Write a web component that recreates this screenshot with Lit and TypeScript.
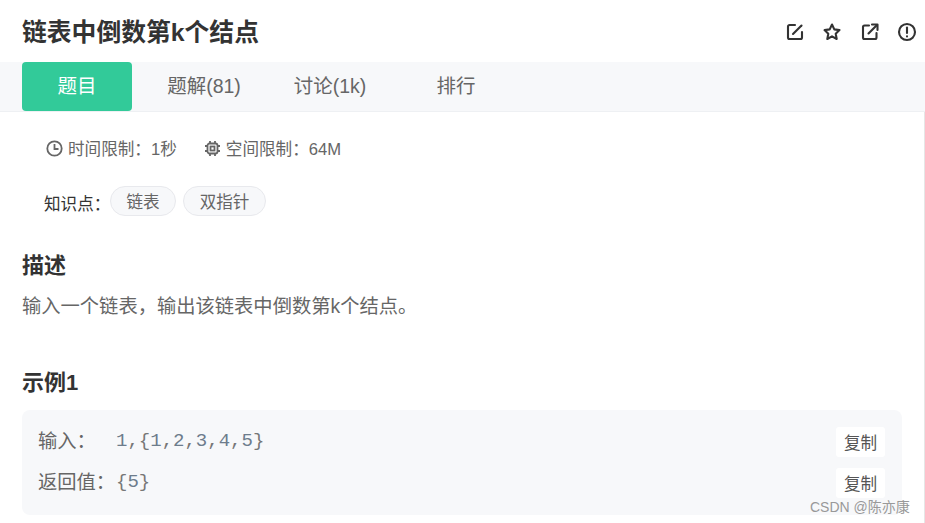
import { LitElement, html, css } from "lit";
import { customElement } from "lit/decorators.js";

@customElement("app-root")
export class AppRoot extends LitElement {
  static styles = css`
    :host {
      display: block;
      width: 925px;
      height: 523px;
      overflow: hidden;
      background: #fff;
      position: relative;
      font-family: "Liberation Sans", "Noto Sans CJK SC", sans-serif;
      color: #666;
    }
    .head {
      height: 62px;
      display: flex;
      align-items: center;
      justify-content: space-between;
      padding: 2px 7px 0 22px;
      box-sizing: border-box;
    }
    h1 {
      margin: 0;
      font-size: 24.8px;
      line-height: 30px;
      font-weight: 700;
      color: #333;
      padding-top: 2px;
    }
    .tools { display: flex; gap: 15.3px; }
    .tools svg { width: 22px; height: 22px; display: block; fill: none; stroke: #333; stroke-width: 2.1; stroke-linecap: round; stroke-linejoin: round; }
    .tabs {
      height: 50px;
      background: #f7f8fa;
      border-bottom: 1px solid #eef0f3;
      box-sizing: border-box;
      display: flex;
      padding-left: 22px;
      font-size: 19.5px;
    }
    .tab {
      width: 110px;
      height: 45px;
      padding-bottom: 4px;
      display: flex;
      align-items: center;
      justify-content: center;
      color: #666;
      margin-right: 16px;
    }
    .tab.active {
      background: #32ca99;
      color: #fff;
      border-radius: 4px;
      margin-right: 17px;
    }
    .limits {
      display: flex;
      padding: 26px 0 0 45px;
      font-size: 16.6px;
      line-height: 24px;
      gap: 26px;
      height: 24px;
    }
    .limit { display: flex; align-items: center; gap: 4px; }
    .limit svg { width: 19px; height: 19px; fill: none; stroke: #666; stroke-width: 1.8; margin-top: -4px; }
    .know {
      display: flex;
      align-items: center;
      padding: 24px 0 0 44px;
      font-size: 16.6px;
      color: #333;
      height: 30px;
    }
    .know .lbl { width: 66px; padding-top: 4px; white-space: nowrap; }
    .pill {
      height: 30px;
      box-sizing: border-box;
      border: 1px solid #e8e9ed;
      border-radius: 15px;
      background: #f7f8fa;
      color: #666;
      padding: 0 15.5px;
      margin-right: 7px;
      display: flex;
      align-items: center;
    }
    h2 {
      margin: 0;
      font-size: 22px;
      line-height: 28px;
      font-weight: 700;
      color: #333;
      padding-left: 22px;
    }
    h2.d { margin-top: 36px; }
    h2.e { margin-top: 50px; }
    .desc {
      padding: 15px 0 0 22px;
      margin: 0;
      font-size: 19.3px;
      line-height: 24px;
      color: #666;
    }
    .example {
      margin: 13px 23px 0 22px;
      background: #f7f8fa;
      border-radius: 8px;
      height: 105px;
      box-sizing: border-box;
      padding: 17px 17px 0 16px;
      display: flex;
      flex-direction: column;
      gap: 11px;
    }
    .row {
      display: flex;
      align-items: center;
      height: 30px;
      font-size: 19.3px;
    }
    .row .k { white-space: nowrap; width: 78px; margin-top: -4px; }
    .code {
      font-family: "Liberation Mono", monospace;
      font-size: 19px;
      color: #777;
      flex: 1;
      margin-top: -2px;
    }
    .n { color: #6d7c8c; }
    .copy {
      width: 49px;
      height: 30px;
      background: #fff;
      border-radius: 3px;
      font-size: 16.6px;
      display: flex;
      align-items: center;
      justify-content: center;
      color: #555;
    }
    .wm {
      position: absolute;
      left: 810px;
      top: 497px;
      font-size: 14px;
      line-height: 20px;
      color: #999;
    }
    .rule {
      position: absolute;
      left: 924px;
      top: 112px;
      bottom: 0;
      width: 1px;
      background: #e6e6e6;
    }
  `;

  render() {
    return html`
      <div class="head">
        <h1>链表中倒数第k个结点</h1>
        <div class="tools">
          <svg viewBox="0 0 22 22"><path d="M11 4H5.5A1.5 1.5 0 0 0 4 5.5v11A1.5 1.5 0 0 0 5.5 18h11a1.5 1.5 0 0 0 1.5-1.5V11"/><path d="M9 13l8.5-8.5"/></svg>
          <svg viewBox="0 0 22 22"><path d="M11 3.5l2.3 4.9 5.2.7-3.8 3.6 1 5.3-4.7-2.6-4.7 2.6 1-5.3-3.8-3.6 5.2-.7z"/></svg>
          <svg viewBox="0 0 22 22"><path d="M10 4.5H5.5A1.5 1.5 0 0 0 4 6v10.5A1.5 1.5 0 0 0 5.5 18H16a1.5 1.5 0 0 0 1.5-1.5V12"/><path d="M9.5 12.5L18 4"/><path d="M13 3.5h5.5V9"/></svg>
          <svg viewBox="0 0 22 22"><circle cx="11" cy="11" r="8"/><path d="M11 6.5v5.5"/><path d="M11 15.2v.3"/></svg>
        </div>
      </div>
      <div class="tabs">
        <div class="tab active">题目</div>
        <div class="tab">题解(81)</div>
        <div class="tab">讨论(1k)</div>
        <div class="tab">排行</div>
      </div>
      <div class="limits">
        <div class="limit">
          <svg viewBox="0 0 19 19"><circle cx="9.5" cy="9.5" r="7.2"/><path d="M9.5 5v5h4"/></svg>
          <span>时间限制：1秒</span>
        </div>
        <div class="limit">
          <svg viewBox="0 0 19 19"><rect x="4.5" y="4.5" width="10" height="10" rx="2"/><rect x="7.5" y="7.5" width="4" height="4"/><path d="M7 2v2M12 2v2M7 15v2M12 15v2M2 7h2M2 12h2M15 7h2M15 12h2"/></svg>
          <span>空间限制：64M</span>
        </div>
      </div>
      <div class="know">
        <span class="lbl">知识点：</span>
        <span class="pill">链表</span>
        <span class="pill">双指针</span>
      </div>
      <h2 class="d">描述</h2>
      <p class="desc">输入一个链表，输出该链表中倒数第k个结点。</p>
      <h2 class="e">示例1</h2>
      <div class="example">
        <div class="row">
          <span class="k">输入：</span>
          <span class="code"><span class="n">1</span>,{<span class="n">1</span>,<span class="n">2</span>,<span class="n">3</span>,<span class="n">4</span>,<span class="n">5</span>}</span>
          <span class="copy">复制</span>
        </div>
        <div class="row">
          <span class="k">返回值：</span>
          <span class="code">{<span class="n">5</span>}</span>
          <span class="copy">复制</span>
        </div>
      </div>
      <div class="wm">CSDN @陈亦康</div>
      <div class="rule"></div>
    `;
  }
}
